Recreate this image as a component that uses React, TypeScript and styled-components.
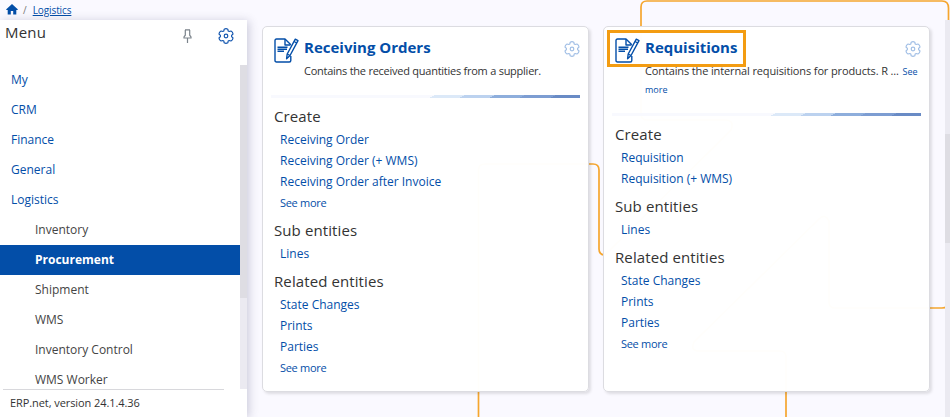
import React from "react";
import styled, { createGlobalStyle } from "styled-components";

const BLUE = "#034ea8";

const GlobalStyle = createGlobalStyle`
  * { box-sizing: border-box; }
  html, body { margin: 0; padding: 0; overflow: hidden; }
  body { background: #faf9ff; font-family: "Open Sans", sans-serif; color: #333; }
`;

const Page = styled.div`
  position: relative;
  display: flex;
  flex-direction: column;
  width: 950px;
  height: 417px;
  overflow: hidden;
  background: #faf9ff;
`;

const Wires = styled.svg`
  position: absolute;
  left: 0;
  top: 0;
  pointer-events: none;
`;

const Breadcrumb = styled.nav`
  position: relative;
  display: flex;
  align-items: center;
  height: 20px;
  flex: none;
  padding: 0 0 1px 6px;
  font-size: 10px;
  color: #777;
`;

const Slash = styled.span`
  margin: 0 6px 0 5px;
`;

const Crumb = styled.a`
  color: ${BLUE};
  letter-spacing: -0.1px;
  text-decoration: underline;
`;

const Body = styled.div`
  position: relative;
  display: flex;
  height: 397px;
`;

const Sidebar = styled.aside`
  display: flex;
  flex-direction: column;
  width: 247px;
  flex: none;
  background: #fff;
  box-shadow: 2px 1px 9px rgba(60, 60, 100, 0.24);
`;

const SidebarHeader = styled.header`
  display: flex;
  height: 45px;
  flex: none;
  padding: 0 13px 0 5px;
`;

const MenuTitle = styled.h1`
  margin: 1px auto 0 0;
  font-size: 15px;
  line-height: 22px;
  font-weight: 400;
  letter-spacing: 0.2px;
`;

const PinBox = styled.span`
  margin: 9px 26px 0 0;
  line-height: 0;
`;

const GearBox = styled.span<{ $top: number }>`
  margin-top: ${(p) => p.$top}px;
  line-height: 0;
`;

const MenuScroll = styled.div`
  display: flex;
  height: 324px;
  flex: none;
  overflow: hidden;
`;

const MenuList = styled.ul`
  flex: 1;
  margin: 0;
  padding: 0;
  list-style: none;
`;

const MenuItem = styled.li<{ $sub?: boolean; $active?: boolean }>`
  height: 30px;
  padding-left: ${(p) => (p.$sub ? 35 : 11)}px;
  font-size: 12px;
  line-height: 29px;
  color: ${(p) => (p.$active ? "#fff" : p.$sub ? "#444" : BLUE)};
  background: ${(p) => (p.$active ? BLUE : "transparent")};
  font-weight: ${(p) => (p.$active ? 700 : 400)};
`;

const Track = styled.div<{ $width: number; $before: number }>`
  width: ${(p) => p.$width}px;
  flex: none;
  padding-top: ${(p) => p.$before}px;
  background: #ebeaf1;
`;

const Thumb = styled.div<{ $height: number }>`
  height: ${(p) => p.$height}px;
  background: #dedde3;
`;

const Version = styled.footer`
  width: 221px;
  margin-left: 3px;
  padding-left: 7px;
  border-top: 1px solid #d8d8dc;
  font-size: 11px;
  line-height: 26px;
  letter-spacing: -0.08px;
`;

const Main = styled.main`
  display: flex;
  flex: 1;
  align-items: flex-start;
  gap: 14px;
  padding: 6px 0 0 15px;
`;

const Card = styled.article`
  width: 327px;
  height: 366px;
  flex: none;
  padding: 0 8px;
  border: 1px solid #dcdce1;
  border-radius: 5px;
  background: rgba(255, 255, 255, 0.985);
  box-shadow: 2px 2px 3px rgba(0, 0, 0, 0.11);
`;

const CardHead = styled.header`
  display: flex;
  padding: 11px 0 0 3px;
`;

const CardText = styled.div`
  flex: 1;
  margin: -1px 0 0 5px;
  padding-bottom: 15px;
`;

const CardTitle = styled.h2`
  margin: 0;
  font-size: 15px;
  line-height: 20px;
  font-weight: 700;
  color: ${BLUE};
  white-space: nowrap;
`;

const CardDescription = styled.p<{ $tracking: number }>`
  margin: 5px -20px 0 0;
  font-size: 11px;
  line-height: 18px;
  letter-spacing: ${(p) => p.$tracking}px;
`;

const InlineMore = styled.a`
  margin-left: 1px;
  font-size: 9px;
  line-height: 0;
  letter-spacing: 0;
  color: ${BLUE};
`;

const Stripe = styled.div`
  height: 3px;
  margin-bottom: 1px;
  background: linear-gradient(
    153deg,
    #f8f9fe 0 52%,
    #dce9f8 52% 61.5%,
    #bcd2ef 61.5% 71%,
    #8eaedc 71% 80.5%,
    #7d9dd2 80.5% 90.5%,
    #698bc5 90.5%
  );
`;

const Section = styled.section`
  padding-left: 3px;
`;

const SectionTitle = styled.h3`
  margin: 0;
  padding: 7px 0 2px;
  font-size: 15px;
  line-height: 21px;
  font-weight: 400;
  letter-spacing: 0.1px;
`;

const Entry = styled.a<{ $small?: boolean }>`
  display: block;
  padding-left: 6px;
  font-size: ${(p) => (p.$small ? 11 : 12)}px;
  letter-spacing: ${(p) => (p.$small ? -0.3 : 0)}px;
  line-height: 21px;
  color: ${BLUE};
`;

const Highlight = styled.div`
  position: absolute;
  left: 607px;
  top: 30px;
  width: 139px;
  height: 37px;
  border: 3px solid #f39c12;
`;

const HomeIcon = () => (
  <svg width="12" height="11" viewBox="0 0 12 11" fill={BLUE}>
    <path d="M6 0 12 5.4 11.3 6.1H10.3V10.5H7.2V7H4.8V10.5H1.7V6.1H.7L0 5.4Z" />
  </svg>
);

const PinIcon = () => (
  <svg width="9" height="15" viewBox="0 0 9 15" fill="none" stroke="#7b838b" strokeWidth="1.2">
    <path d="M2 .8H7M2.3 1V6.2L1 8V9H8V8L6.7 6.2V1M4.5 9V14" />
  </svg>
);

const GearIcon = ({ color }: { color: string }) => (
  <svg width="16" height="16" viewBox="0 0 16 16" fill="none" stroke={color} strokeWidth="1.2" strokeLinejoin="round">
    <path d="M6.2 1.2Q8 .2 9.8 1.2L10.2 3 11.2 3.5 13 3Q14.9 4.1 15 6L13.6 7.4V8.6L15 10Q14.9 11.9 13 13L11.2 12.5 10.2 13 9.8 14.8Q8 15.8 6.2 14.8L5.8 13 4.8 12.5 3 13Q1.1 11.9 1 10L2.4 8.6V7.4L1 6Q1.1 4.1 3 3L4.8 3.5 5.8 3Z" />
    <circle cx="8" cy="8" r="1.8" />
  </svg>
);

const OrderIcon = () => (
  <svg width="25" height="25" viewBox="0 0 25 25" fill="none" stroke={BLUE} strokeWidth="1.4" strokeLinejoin="round">
    <path d="M16.8 18V22.5Q16.8 24 15.3 24H2.5Q1 24 1 22.5V2.5Q1 1 2.5 1H11L16.8 6.8" />
    <path d="M11 1V7H16.5" />
    <path d="M3.5 9.3H13.5M3.5 11.3H13M3.5 13.3H10" strokeWidth="1.4" />
    <path d="M21.3 1.2 24 2.7 16 17.5 12.6 20.7 13.2 16Z" fill="#fff" />
    <path d="M20 3.5 22.8 5M13.2 16 16 17.5" />
  </svg>
);

const topMenu = ["My", "CRM", "Finance", "General", "Logistics"];
const subMenu = ["Inventory", "Procurement", "Shipment", "WMS", "Inventory Control", "WMS Worker"];

type Group = { title: string; links: string[]; more?: boolean };

const related: Group = { title: "Related entities", links: ["State Changes", "Prints", "Parties"], more: true };
const sub: Group = { title: "Sub entities", links: ["Lines"] };

const receiving: Group[] = [
  {
    title: "Create",
    links: ["Receiving Order", "Receiving Order (+ WMS)", "Receiving Order after Invoice"],
    more: true,
  },
  sub,
  related,
];

const requisitions: Group[] = [
  { title: "Create", links: ["Requisition", "Requisition (+ WMS)"] },
  sub,
  related,
];

type EntityCardProps = { title: string; tracking: number; groups: Group[]; children: React.ReactNode };

const EntityCard = ({ title, tracking, groups, children }: EntityCardProps) => (
  <Card>
    <CardHead>
      <OrderIcon />
      <CardText>
        <CardTitle>{title}</CardTitle>
        <CardDescription $tracking={tracking}>{children}</CardDescription>
      </CardText>
      <GearBox $top={3}>
        <GearIcon color="#a3c0e6" />
      </GearBox>
    </CardHead>
    <Stripe />
    {groups.map((g) => (
      <Section key={g.title}>
        <SectionTitle>{g.title}</SectionTitle>
        {g.links.map((l) => (
          <Entry key={l}>{l}</Entry>
        ))}
        {g.more && <Entry $small>See more</Entry>}
      </Section>
    ))}
  </Card>
);

export default function App() {
  return (
    <Page>
      <GlobalStyle />
      <Wires width="950" height="417" fill="none" stroke="#f5a62f" strokeWidth="1.7">
        <path d="M478.5 417V170Q478.5 164 485 164H593Q599 164 599 170V249Q599 255 605 255L731 130Q735 120 725 120H647Q641 120 641 114V7Q641 1 647 1H942Q948.5 1 948.5 8V302Q948.5 308 942 308H835Q829 308 829 302V221Q825 213 819 219L694 342Q690 351 699 351H780Q786 351 786 357V417" />
      </Wires>
      <Breadcrumb>
        <HomeIcon />
        <Slash>/</Slash>
        <Crumb>Logistics</Crumb>
      </Breadcrumb>
      <Body>
        <Sidebar>
          <SidebarHeader>
            <MenuTitle>Menu</MenuTitle>
            <PinBox>
              <PinIcon />
            </PinBox>
            <GearBox $top={8}>
              <GearIcon color="#1658b0" />
            </GearBox>
          </SidebarHeader>
          <MenuScroll>
            <MenuList>
              {topMenu.map((m) => (
                <MenuItem key={m}>{m}</MenuItem>
              ))}
              {subMenu.map((m) => (
                <MenuItem key={m} $sub $active={m === "Procurement"}>
                  {m}
                </MenuItem>
              ))}
            </MenuList>
            <Track $width={7} $before={0}>
              <Thumb $height={233} />
            </Track>
          </MenuScroll>
          <Version>ERP.net, version 24.1.4.36</Version>
        </Sidebar>
        <Main>
          <EntityCard title="Receiving Orders" tracking={-0.25} groups={receiving}>
            Contains the received quantities from a supplier.
          </EntityCard>
          <EntityCard title="Requisitions" tracking={-0.13} groups={requisitions}>
            Contains the internal requisitions for products. R ... <InlineMore>See more</InlineMore>
          </EntityCard>
        </Main>
        <Track $width={5} $before={114}>
          <Thumb $height={109} />
        </Track>
      </Body>
      <Highlight />
    </Page>
  );
}
